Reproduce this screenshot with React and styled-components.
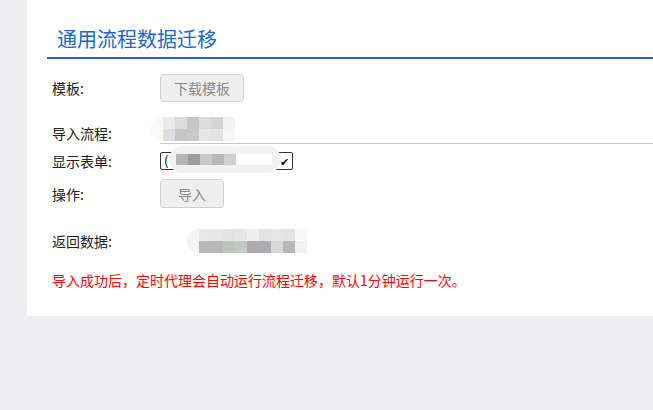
import React from 'react'
import styled, { createGlobalStyle } from 'styled-components'

const GlobalStyle = createGlobalStyle`
  html, body {
    margin: 0;
    padding: 0;
    background: #eeeef3;
  }
  body {
    font-family: "Noto Sans CJK SC", "Noto Sans", sans-serif;
    font-size: 14px;
    color: #222;
  }
`

const Page = styled.div`
  width: 653px;
  height: 410px;
  overflow: hidden;
  background: #eeeef3;
`

const Panel = styled.div`
  margin-left: 27px;
  height: 316px;
  background: #fff;
`

const Title = styled.h2`
  margin: 0 0 0 20px;
  padding: 26px 0 5px 10px;
  font-size: 20px;
  font-weight: 400;
  line-height: 26px;
  color: #2267c8;
  border-bottom: 2px solid #1a66cc;
`

const Form = styled.div`
  padding-left: 25px;
`

const Row = styled.div`
  display: flex;
  align-items: center;
  height: ${(p) => p.h}px;
  margin-top: ${(p) => p.mt}px;
`

const Label = styled.div`
  width: 108px;
  flex: 0 0 108px;
  font-size: 14px;
  line-height: 18px;
  color: #222;
`

const Button = styled.button`
  width: ${(p) => p.w}px;
  height: 100%;
  padding: 0;
  border: 1px solid #cfcfcf;
  border-radius: 4px;
  background: #efefef;
  color: #8a8a8a;
  font-family: inherit;
  font-size: 14px;
`

const Field = styled.div`
  position: relative;
  flex: 1;
  height: 100%;
  border-bottom: ${(p) => (p.underline ? '1px solid #c8c8c8' : 'none')};
`

const Select = styled.div`
  position: relative;
  box-sizing: border-box;
  width: 133px;
  height: 100%;
  border: 1px solid #333;
  border-radius: 2px;
  display: flex;
  align-items: center;
  justify-content: space-between;
  padding: 0 3px 0 3px;
  font-size: 13px;
  line-height: 16px;
  color: #000;
`

const Arrow = styled.span`
  font-size: 11px;
  color: #111;
`

const Smudge = styled.div`
  position: absolute;
  left: ${(p) => p.x}px;
  top: ${(p) => p.y}px;
  width: ${(p) => p.w}px;
  height: ${(p) => p.hh}px;
  border-radius: ${(p) => p.hh / 2}px;
  background: ${(p) => p.bg || '#f4f4f4'};
  display: flex;
  flex-direction: column;
  justify-content: center;
  padding-left: ${(p) => p.pl}px;
  box-sizing: border-box;
`

const MosaicRow = styled.div`
  display: flex;
`

const Cell = styled.div`
  width: 12px;
  height: ${(p) => p.ch || 12}px;
  background: ${(p) => p.c};
`

const Note = styled.div`
  margin-top: 18px;
  font-size: 14px;
  line-height: 18px;
  color: #ff0000;
`

const Mosaic = ({ rows, ch }) => (
  <>
    {rows.map((r, i) => (
      <MosaicRow key={i}>
        {r.map((c, j) => (
          <Cell key={j} c={c} ch={ch} />
        ))}
      </MosaicRow>
    ))}
  </>
)

const importRows = [
  ['#e9eaec', '#dadbdc', '#c6c6c6', '#dcdcdc', '#d4d4d2', '#f0f2f4'],
  ['#dde0e2', '#c6c6c4', '#c9c9c9', '#e6e6e8', '#e3e3e3', '#f6f6f6'],
]

const formRows = [['#b7b5b2', '#9d9e9c', '#c8c7cc', '#bcb7b2', '#cdd1d5', '#fff', '#fff', '#fff']]

const resultRows = [
  ['#e8e8e6', '#e6e6e4', '#e2e4e4', '#e6e6e6', '#efefed', '#e4e4e6', '#e6e6e6', '#e4e4e4', '#f8f8f8'],
  ['#b9b7b5', '#b8b8b6', '#c0c4c0', '#c4c8c2', '#aeacac', '#aaaeb2', '#d8d8d8', '#bab6b6', '#eef2f4'],
]

const App = () => (
  <Page>
    <GlobalStyle />
    <Panel>
      <Title>通用流程数据迁移</Title>
      <Form>
        <Row h={28} mt={15}>
          <Label>模板:</Label>
          <Button w={84}>下载模板</Button>
        </Row>
        <Row h={21} mt={20}>
          <Label>导入流程:</Label>
          <Field underline>
            <Smudge x={-9} y={-5} w={85} hh={24} bg="#faf9f6" pl={12}>
              <Mosaic rows={importRows} />
            </Smudge>
          </Field>
        </Row>
        <Row h={18} mt={9}>
          <Label>显示表单:</Label>
          <Select>
            <span>(</span>
            <Arrow>✔</Arrow>
            <Smudge x={8} y={-7} w={112} hh={27} bg="#f1f1f1" pl={7}>
              <Mosaic rows={formRows} ch={11} />
            </Smudge>
          </Select>
        </Row>
        <Row h={29} mt={9}>
          <Label>操作:</Label>
          <Button w={64}>导入</Button>
        </Row>
        <Row h={24} mt={21}>
          <Label>返回数据:</Label>
          <Field>
            <Smudge x={27} y={0} w={120} hh={24} bg="#f4f4f6" pl={12}>
              <Mosaic rows={resultRows} />
            </Smudge>
          </Field>
        </Row>
        <Note>导入成功后，定时代理会自动运行流程迁移，默认1分钟运行一次。</Note>
      </Form>
    </Panel>
  </Page>
)

export default App
